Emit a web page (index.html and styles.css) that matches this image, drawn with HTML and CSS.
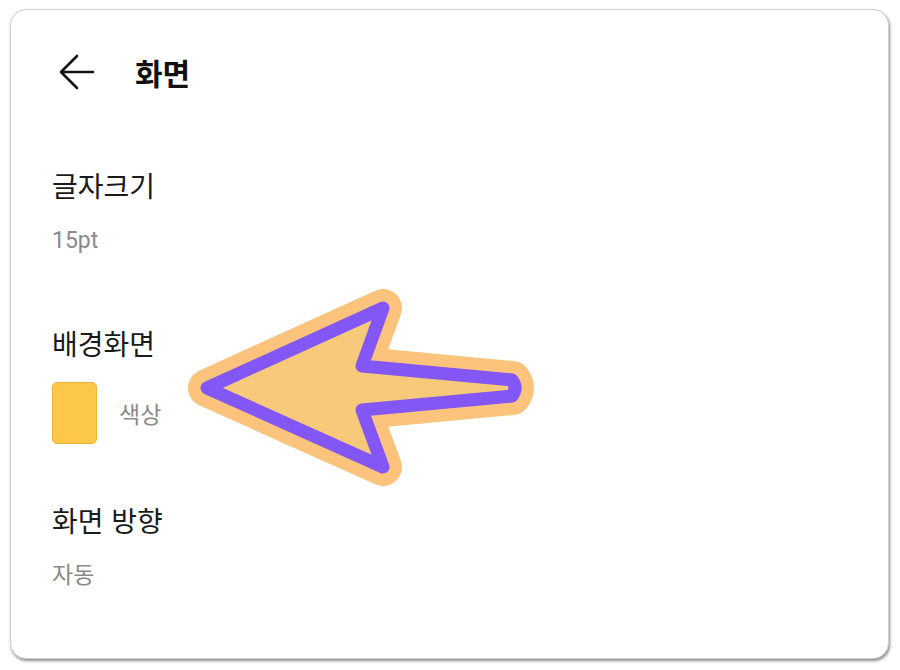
FILE: index.html
```html
<!DOCTYPE html>
<html lang="ko">
<head>
<meta charset="utf-8">
<link rel="stylesheet" href="styles.css">
</head>
<body>
<div class="card">
  <header class="topbar">
    <svg class="back" width="40" height="40" viewBox="0 0 40 40">
      <path d="M34 20 H2 M18 4 L2 20 L18 36" fill="none" stroke="#111" stroke-width="2.6" stroke-linecap="round" stroke-linejoin="round"/>
    </svg>
    <h1 class="title">화면</h1>
  </header>
  <section class="item">
    <div class="label">글자크기</div>
    <div class="value">15pt</div>
  </section>
  <section class="item item-bg">
    <div class="label">배경화면</div>
    <div class="swatch-row">
      <span class="swatch"></span>
      <span class="value">색상</span>
    </div>
  </section>
  <section class="item">
    <div class="label">화면 방향</div>
    <div class="value">자동</div>
  </section>
  <svg class="pointer" width="900" height="670" viewBox="0 0 900 670">
    <path d="M207 388 L383 308 L362 366 L512 380 Q518 388 512 396 L362 410 L383 467 Z" fill="#f6ca7a" stroke="#fcc37c" stroke-width="38" stroke-linejoin="round"/>
    <path d="M207 388 L383 308 L362 366 L512 380 Q518 388 512 396 L362 410 L383 467 Z" fill="#f6ca7a" stroke="#8257f5" stroke-width="13" stroke-linejoin="round"/>
  </svg>
</div>
</body>
</html>
```
FILE: styles.css
```css
html, body {
  margin: 0;
  padding: 0;
  background: #ffffff;
}
body {
  width: 900px;
  height: 670px;
  font-family: Roboto, "Noto Sans CJK KR", sans-serif;
  padding: 9px 11px 11px 10px;
  box-sizing: border-box;
}
.card {
  position: relative;
  height: 650px;
  background: #fff;
  border: 1px solid #cfcfcf;
  border-radius: 16px;
  box-shadow: 1px 2px 3px rgba(0,0,0,0.45);
  box-sizing: border-box;
  padding: 0 0 0 41px;
}
.topbar {
  display: flex;
  align-items: center;
  height: 124px;
}
.back {
  margin-left: 7px;
}
.title {
  margin: 0 0 0 36px;
  font-size: 30px;
  line-height: 40px;
  font-weight: 700;
  color: #111;
  font-family: "Noto Sans CJK KR", sans-serif;
}
.item {
  display: flex;
  flex-direction: column;
  margin-top: 69px;
}
.item:first-of-type {
  margin-top: 33px;
}
.item-bg + .item {
  margin-top: 58px;
}
.label {
  font-family: "Noto Sans CJK KR", sans-serif;
  font-size: 28px;
  color: #1a1a1a;
  line-height: 36px;
}
.value {
  font-family: Roboto, "Noto Sans CJK KR", sans-serif;
  font-size: 23px;
  color: #8a8a8a;
  line-height: 30px;
  margin-top: 23px;
}
.swatch-row {
  display: flex;
  align-items: center;
  margin-top: 21px;
}
.swatch-row .value {
  margin: 0 0 0 22px;
  font-family: "Noto Sans CJK KR", sans-serif;
}
.swatch {
  width: 45px;
  height: 62px;
  background: #fdc84a;
  border: 1px solid #e8b43c;
  border-radius: 5px;
  box-sizing: border-box;
}
.pointer {
  position: absolute;
  left: -11px;
  top: -10px;
}
```
